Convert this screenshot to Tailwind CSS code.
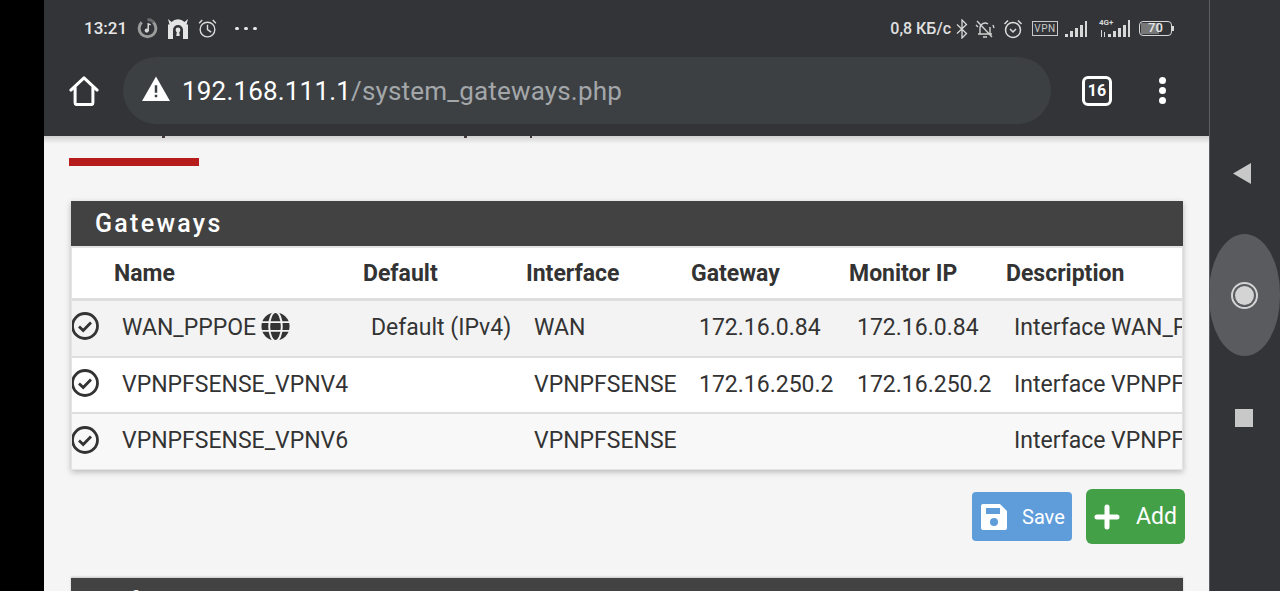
<!DOCTYPE html>
<html lang="en">
  <head>
    <meta charset="UTF-8" />
    <title>Gateways</title>
    <script src="https://cdn.jsdelivr.net/npm/@tailwindcss/browser@4"></script>
  </head>
  <body class="bg-black font-['Roboto',sans-serif] overflow-hidden">
    <div class="flex h-[591px] w-[1280px] overflow-hidden">
      <!-- Left black strip -->
      <div class="w-[44px] shrink-0 bg-black"></div>

      <!-- Phone screen -->
      <div class="w-[1165px] shrink-0 flex flex-col bg-[#f5f5f5] overflow-hidden">
        <!-- Status bar + address bar -->
        <header class="h-[136px] shrink-0 bg-[#323437] text-white">
          <div class="h-[57px] flex items-center pl-[40px] pr-[35px]">
            <span class="text-[17px] font-medium text-[#e8e8e8]">13:21</span>
            <svg class="ml-[10px]" width="21" height="21" viewBox="0 0 20 20" fill="none">
              <path d="M15.500 4a8 8 0 1 1-11 0" stroke="#9c9c9c" stroke-width="2.800" />
              <path d="M10 1.500a8.500 8.500 0 0 1 6 2.500" stroke="#6a6a6a" stroke-width="2.800" />
              <circle cx="9.300" cy="12" r="2" fill="#d8d8d8" />
              <path d="M10.700 12V5.500l2.300 1" stroke="#d8d8d8" stroke-width="1.400" />
            </svg>
            <svg class="ml-[9px]" width="22" height="22" viewBox="0 0 22 22" fill="#e4e4e4">
              <path fill-rule="evenodd" d="M1 1l3.500 3a9 9 0 0 1 13 0L21 1l-1.500 5.500H21V21h-5v-9a5 5 0 0 0-10 0v9H1V6.500h1.500z" />
              <circle cx="11" cy="12" r="2.400" />
              <path d="M10 13h2l.8 5h-3.600z" />
            </svg>
            <svg class="ml-[8px]" width="21" height="21" viewBox="0 0 20 20" fill="none" stroke="#dcdcdc" stroke-width="1.300">
              <circle cx="10" cy="11" r="7" />
              <path d="M10 6.500V11l3.500 2.500M2 5l3-3M18 5l-3-3" />
            </svg>
            <span class="ml-[17px] flex gap-[5px]">
              <i class="block w-[4px] h-[3px] rounded-full bg-[#e8e8e8]"></i>
              <i class="block w-[4px] h-[3px] rounded-full bg-[#e8e8e8]"></i>
              <i class="block w-[4px] h-[3px] rounded-full bg-[#e8e8e8]"></i>
            </span>

            <span class="ml-auto text-[16px] font-medium text-[#e0e0e0]">0,8 КБ/с</span>
            <svg class="ml-[4px]" width="14" height="20" viewBox="0 0 14 20" fill="none" stroke="#d8d8d8" stroke-width="1.300">
              <path d="M2 5.500l9.500 9L7 19V1l4.500 4.500L2 14.500" />
            </svg>
            <svg class="ml-[6px]" width="20" height="20" viewBox="0 0 20 20" fill="none" stroke="#d0d0d0" stroke-width="1.400">
              <path d="M5 15V9a5 5 0 0 1 8-4M15 8v7M3 15h14M8 18h4M2 2l15 16" />
              <path d="M1 6l2 2M18 6l1 3" />
            </svg>
            <svg class="ml-[8px]" width="20" height="20" viewBox="0 0 20 20" fill="none" stroke="#dcdcdc" stroke-width="1.500">
              <circle cx="10" cy="11" r="7.500" />
              <path d="M7 10l3 3 3-3M1.500 5l3.500-3.500M18.500 5L15 1.500" />
            </svg>
            <span class="ml-[9px] w-[26px] h-[15px] border border-[#c8c8c8] text-[10px] leading-[13px] text-center text-[#c8c8c8] tracking-[0.5px]">VPN</span>
            <svg class="ml-[6px]" width="24" height="18" viewBox="0 0 24 18" fill="#d8d8d8">
              <path d="M1 14h3v3H1zM6 11h3v6H6zM11 8h3v9h-3zM16 5h3v12h-3zM21 1h2v16h-2z" />
            </svg>
            <span class="ml-[11px] relative w-[31px] h-[21px] block">
              <span class="absolute left-0 top-0 text-[8px] leading-[9px] font-bold text-[#d8d8d8]">4G+</span>
              <svg class="absolute left-0 top-[1px]" width="31" height="20" viewBox="0 0 31 20" fill="#d8d8d8">
                <path d="M2 11h1v7H2zM5 13h1v5H5zM9 15h3v3H9zM14 12h3v6h-3zM19 9h3v9h-3zM24 6h3v12h-3zM29 1h2v17h-2z" />
              </svg>
            </span>
            <span class="ml-[9px] relative block w-[33px] h-[15px] border-[1.5px] border-[#d8d8d8] rounded-[4px] overflow-hidden">
              <span class="absolute inset-y-[1px] left-[1px] w-[18px] bg-[#777]"></span>
              <span class="absolute inset-0 text-center text-[13px] leading-[12px] font-medium text-[#e4e4e4]">70</span>
            </span>
            <span class="block w-[2px] h-[5px] bg-[#d8d8d8]"></span>
          </div>

          <div class="h-[79px] flex items-start">
            <svg class="ml-[25px] mt-[19px]" width="30" height="30" viewBox="0 0 32 32" fill="none" stroke="white" stroke-width="3.200" stroke-linejoin="round" stroke-linecap="round">
              <path d="M2 15L16 2l14 13M6.500 12v16.500a2 2 0 0 0 2 2h15a2 2 0 0 0 2-2V12" />
            </svg>
            <div class="ml-[24px] w-[928px] h-[67px] rounded-full bg-[#3c4043] flex items-center pl-[18px]">
              <svg class="mb-[3px]" width="30" height="26" viewBox="0 0 30 27" fill="white">
                <path fill-rule="evenodd" d="M15 0.500L29.500 26H.500zM13.700 9.500h2.600v8h-2.600zM13.700 19.500h2.600v2.600h-2.600z" />
              </svg>
              <span class="ml-[11px] mt-[2px] text-[26px] tracking-[0.18px] text-white">192.168.111.1<span class="text-[#a4a7aa]">/system_gateways.php</span></span>
            </div>
            <span class="ml-[31px] mt-[19px] w-[30px] h-[30px] rounded-[6px] border-[3px] border-white flex items-center justify-center text-[16px] font-bold text-white">16</span>
            <span class="ml-[47px] mt-[20px] flex flex-col gap-[3px]">
              <i class="block w-[7px] h-[7px] rounded-full bg-white"></i>
              <i class="block w-[7px] h-[7px] rounded-full bg-white"></i>
              <i class="block w-[7px] h-[7px] rounded-full bg-white"></i>
            </span>
          </div>
        </header>

        <!-- Page content -->
        <main class="relative flex-1 pl-[27px]">
          <div class="absolute inset-x-0 top-0 h-[8px] bg-gradient-to-b from-black/15 to-transparent"></div>
          <!-- bottoms of the scrolled-off title -->
          <i class="absolute left-[118px] top-0 w-[3px] h-[2px] bg-[#43383c]"></i>
          <i class="absolute left-[420px] top-0 w-[3px] h-[2px] bg-[#43383c]"></i>
          <i class="absolute left-[486px] top-0 w-[2px] h-[2px] bg-[#43383c]"></i>
          <div class="ml-[-2px] mt-[22px] w-[130px] h-[8px] bg-[#b71c1c]"></div>

          <section class="mt-[35px] w-[1112px] bg-[#e4e4e4] shadow-[0_2px_6px_rgba(0,0,0,0.25)]">
            <h2 class="h-[45px] bg-[#424242] pl-[24px] text-[25px] leading-[45px] font-medium tracking-[2.3px] text-white">Gateways</h2>
            <div class="ml-[1px] mr-[1px] overflow-hidden pt-[2px] pb-[1px]">
              <table class="table-fixed w-[1200px] text-[23px] text-[#333] border-collapse">
                <colgroup>
                  <col class="w-[34px]" />
                  <col class="w-[249px]" />
                  <col class="w-[163px]" />
                  <col class="w-[165px]" />
                  <col class="w-[158px]" />
                  <col class="w-[157px]" />
                  <col class="w-[274px]" />
                </colgroup>
                <thead>
                  <tr class="h-[51px] bg-white border-b-[3px] border-[#dedede] font-bold text-left">
                    <th></th>
                    <th class="pl-[8px] pt-[2px] font-bold">Name</th>
                    <th class="pl-[8px] pt-[2px] font-bold">Default</th>
                    <th class="pl-[8px] pt-[2px] font-bold">Interface</th>
                    <th class="pl-[8px] pt-[2px] font-bold">Gateway</th>
                    <th class="pl-[8px] pt-[2px] font-bold">Monitor IP</th>
                    <th class="pl-[8px] pt-[2px] font-bold">Description</th>
                  </tr>
                </thead>
                <tbody>
                  <tr class="h-[58px] bg-[#f3f3f3] border-b-2 border-[#dedede]">
                    <td>
                      <svg class="block ml-[-1px] mb-[4px]" width="28" height="28" viewBox="0 0 28 28" fill="none" stroke="#333" stroke-width="2.800"><circle cx="14" cy="14" r="12.500" /><path d="M8 14.500l4.200 4L20 10.500" /></svg>
                    </td>
                    <td class="pl-[16px]">
                      <span class="inline-flex items-center gap-[5px] align-middle">WAN_PPPOE
                        <svg class="mb-[5px]" width="29" height="29" viewBox="0 0 30 30"><circle cx="15" cy="15" r="14.500" fill="#333" /><g fill="none" stroke="#f3f3f3" stroke-width="2"><ellipse cx="15" cy="15" rx="6.500" ry="15" /><path d="M0 10.500h30M0 19.500h30" /></g></svg>
                      </span>
                    </td>
                    <td class="pl-[16px]">Default (IPv4)</td>
                    <td class="pl-[16px]">WAN</td>
                    <td class="pl-[16px]">172.16.0.84</td>
                    <td class="pl-[16px]">172.16.0.84</td>
                    <td class="pl-[16px] whitespace-nowrap">Interface WAN_PPPOE Gateway</td>
                  </tr>
                  <tr class="h-[56px] bg-white border-b-2 border-[#dedede]">
                    <td>
                      <svg class="block ml-[-1px] mb-[4px]" width="28" height="28" viewBox="0 0 28 28" fill="none" stroke="#333" stroke-width="2.800"><circle cx="14" cy="14" r="12.500" /><path d="M8 14.500l4.200 4L20 10.500" /></svg>
                    </td>
                    <td class="pl-[16px]">VPNPFSENSE_VPNV4</td>
                    <td></td>
                    <td class="pl-[16px]">VPNPFSENSE</td>
                    <td class="pl-[16px]">172.16.250.2</td>
                    <td class="pl-[16px]">172.16.250.2</td>
                    <td class="pl-[16px] whitespace-nowrap">Interface VPNPFSENSE Gateway</td>
                  </tr>
                  <tr class="h-[56px] bg-[#f8f8f8]">
                    <td>
                      <svg class="block ml-[-1px] mb-[4px]" width="28" height="28" viewBox="0 0 28 28" fill="none" stroke="#333" stroke-width="2.800"><circle cx="14" cy="14" r="12.500" /><path d="M8 14.500l4.200 4L20 10.500" /></svg>
                    </td>
                    <td class="pl-[16px] pb-[1px]">VPNPFSENSE_VPNV6</td>
                    <td></td>
                    <td class="pl-[16px] pb-[1px]">VPNPFSENSE</td>
                    <td></td>
                    <td></td>
                    <td class="pl-[16px] pb-[1px] whitespace-nowrap">Interface VPNPFSENSE Gateway</td>
                  </tr>
                </tbody>
              </table>
            </div>
          </section>

          <div class="mt-[19px] w-[1114px] flex justify-end items-center gap-[14px]">
            <button class="w-[100px] h-[49px] rounded-[4px] bg-[#5e9cda] flex items-center pl-[8px] text-[20px] text-white">
              <svg width="28" height="28" viewBox="0 0 28 28" fill="white"><path fill-rule="evenodd" d="M3 1h17l7 7v17a2 2 0 0 1-2 2H3a2 2 0 0 1-2-2V3a2 2 0 0 1 2-2zM6 5v6h14V5zM14 15a4 4 0 1 0 0 8 4 4 0 0 0 0-8z" /></svg>
              <span class="ml-[14px]">Save</span>
            </button>
            <button class="w-[99px] h-[55px] rounded-[6px] bg-[#43a047] flex items-center pl-[8px] text-[23px] text-white">
              <svg width="26" height="26" viewBox="0 0 26 26" fill="none" stroke="white" stroke-width="5" stroke-linecap="round"><path d="M13 3v20M3 13h20" /></svg>
              <span class="ml-[16px] mt-[1px]">Add</span>
            </button>
          </div>

          <h2 class="mt-[34px] w-[1112px] h-[45px] bg-[#424242] pl-[24px] text-[25px] leading-[47px] font-medium tracking-[2.3px] text-white shadow-[0_-1px_2px_rgba(0,0,0,0.2)]">Default gateway</h2>
        </main>
      </div>

      <!-- Android nav bar -->
      <nav class="relative w-[71px] shrink-0 bg-[#323437] border-l border-[#5c5e61]">
        <svg class="absolute left-[23px] top-[163px]" width="19" height="21" viewBox="0 0 19 21" fill="#c8c8c8"><path d="M18 0v21L0 10.500z" /></svg>
        <div class="absolute left-[-1px] top-[234px] w-[71px] h-[122px] rounded-[36px/60px] bg-[#595b5e]"></div>
        <span class="absolute left-[21px] top-[282px] w-[27px] h-[27px] rounded-full border-2 border-[#d4d4d4] p-[2px]">
          <span class="block w-full h-full rounded-full bg-[#d4d4d4]"></span>
        </span>
        <div class="absolute left-[25px] top-[409px] w-[18px] h-[18px] bg-[#c8c8c8]"></div>
      </nav>
    </div>
  </body>
</html>
